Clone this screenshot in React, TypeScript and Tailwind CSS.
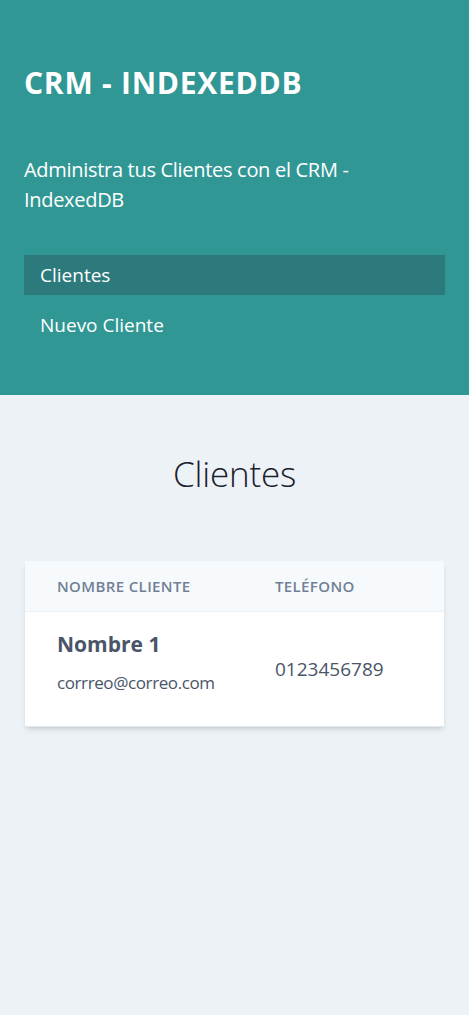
import React from "react"

type Cliente = {
  id: number
  nombre: string
  email: string
  telefono: string
}

const clientes: Cliente[] = [
  { id: 1, nombre: "Nombre 1", email: "corrreo@correo.com", telefono: "0123456789" },
]

export default function App() {
  return (
    <div className="min-h-screen flex flex-col bg-[#edf2f7] font-['Open_Sans','Noto_Sans',sans-serif]">
      <aside className="bg-[#319795] px-6 pt-[60px] pb-[50px] text-white">
        <h1 className="text-[30px] leading-[45px] font-bold tracking-wide">CRM - INDEXEDDB</h1>
        <p className="mt-[50px] text-[20px] leading-[30px] tracking-[-0.3px]">
          Administra tus Clientes con el CRM - IndexedDB
        </p>
        <nav className="mt-10 flex flex-col">
          <a href="#" className="px-4 py-2 text-[19px] leading-6 bg-[#2c7a7b]">
            Clientes
          </a>
          <a href="#" className="mt-2.5 px-4 py-2 text-[19px] leading-6">
            Nuevo Cliente
          </a>
        </nav>
      </aside>

      <main className="flex-1 px-[25px] pt-[52px]">
        <h2 className="text-center text-[35px] leading-[54px] font-light tracking-[-0.2px] text-[#1a202c]">
          Clientes
        </h2>

        <div className="mt-[60px] bg-white shadow-md">
          <table className="w-full table-fixed border-collapse">
            <thead>
              <tr className="bg-[#f7fafc] border-b border-[#edf2f7]">
                <th className="w-[218px] pl-8 pr-2 py-[13px] text-left text-[15px] leading-6 font-semibold uppercase tracking-wide text-[#718096]">
                  Nombre Cliente
                </th>
                <th className="px-8 py-[13px] text-left text-[15px] leading-6 font-semibold uppercase tracking-wide text-[#718096]">
                  Teléfono
                </th>
              </tr>
            </thead>
            <tbody>
              {clientes.map((c) => (
                <tr key={c.id} className="border-b border-[#e2e8f0]">
                  <td className="pl-8 pr-2 pt-4 pb-[30px] align-top">
                    <p className="text-[21px] leading-[33px] font-bold text-[#4a5568]">{c.nombre}</p>
                    <p className="mt-2 text-[17px] leading-[27px] tracking-[-0.4px] text-[#4a5568]">{c.email}</p>
                  </td>
                  <td className="px-8 align-middle text-[19px] leading-[27px] text-[#4a5568]">{c.telefono}</td>
                </tr>
              ))}
            </tbody>
          </table>
        </div>
      </main>
    </div>
  )
}
